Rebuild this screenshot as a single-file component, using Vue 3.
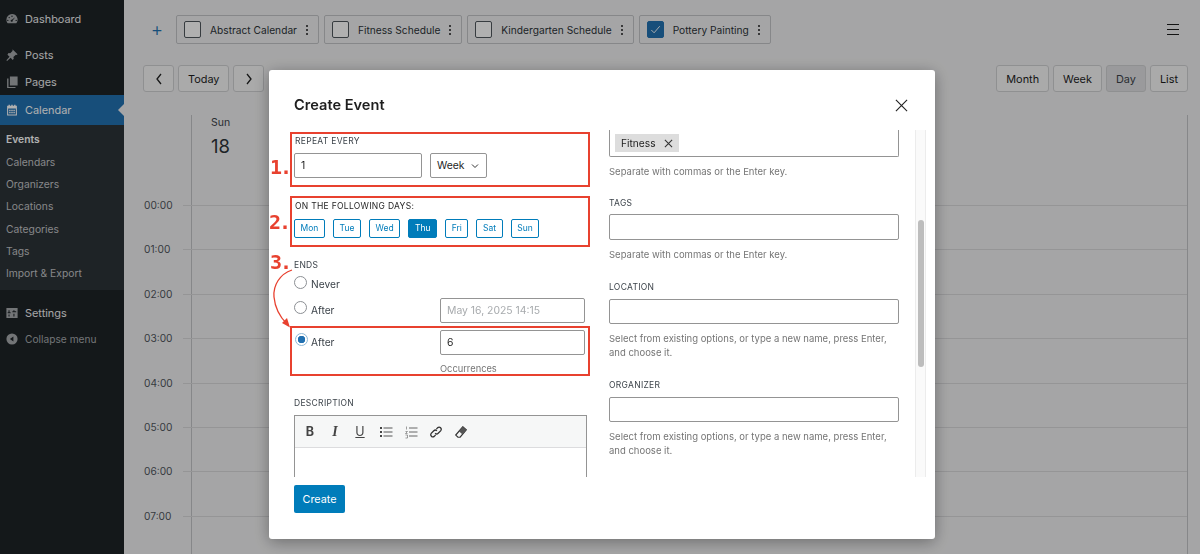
<template>
  <div class="admin">
    <aside class="sidebar">
      <a class="menu-item dash">
        <svg viewBox="0 0 20 20" class="menu-icon"><path d="M10 3a8 8 0 0 0-8 8c0 2 .7 3.700 1.800 5h12.400A8 8 0 0 0 10 3zm0 2a1 1 0 1 1 0 2 1 1 0 0 1 0-2zM6 7a1 1 0 1 1 0 2 1 1 0 0 1 0-2zm8.500.5L11 12a1.500 1.500 0 1 1-1.200-1zM4 11a1 1 0 1 1 0 2 1 1 0 0 1 0-2zm12 0a1 1 0 1 1 0 2 1 1 0 0 1 0-2z" /></svg>
        Dashboard
      </a>
      <a class="menu-item posts">
        <svg viewBox="0 0 20 20" class="menu-icon"><path d="M11 2l7 7-1.500 1-1-.500-3.500 3.500.5 2.500-1.500 1.500-3-3-5 4.500-1-1 4.500-5-3-3L5 7l2.500.5L11 4l-.5-1z" /></svg>
        Posts
      </a>
      <a class="menu-item">
        <svg viewBox="0 0 20 20" class="menu-icon"><path d="M7 2h11v13H7zM5 5v12h10v1.500H3V5z" /></svg>
        Pages
      </a>
      <a class="menu-item active">
        <svg viewBox="0 0 20 20" class="menu-icon"><path d="M3 4h2V2.500h2V4h2V2.500h2V4h2V2.500h2V4h2v14H3zm1.500 4v8.500h11V8zM6 9.500h2v2H6zm3 0h2v2H9zm3 0h2v2h-2zm-6 3h2v2H6zm3 0h2v2H9zm3 0h2v2h-2z" fill-rule="evenodd" /></svg>
        Calendar
      </a>
      <div class="submenu">
        <a v-for="(item, i) in subItems" :key="item" :class="{ current: i === 0 }">{{ item }}</a>
      </div>
      <a class="menu-item settings">
        <svg viewBox="0 0 20 20" class="menu-icon"><path d="M2 3h16v14H2zm3 3v3H3.800v1.500H8V9H6.500V6zm7 0v1.500h-1.500V9H16V7.500h-2.500V6zM5 12v3h1.500v-3zm7-1v4h1.500v-4z" fill-rule="evenodd" /></svg>
        Settings
      </a>
      <a class="menu-item collapse">
        <svg viewBox="0 0 20 20" class="menu-icon"><path d="M10 2a8 8 0 1 0 0 16 8 8 0 0 0 0-16zm2 4.500v7L7 10z" fill-rule="evenodd" /></svg>
        Collapse menu
      </a>
    </aside>

    <main class="main">
      <div class="calendar-bar">
        <span class="add">+</span>
        <div v-for="cal in calendars" :key="cal.name" class="cal-chip">
          <span class="check" :class="{ on: cal.on }">
            <svg v-if="cal.on" viewBox="0 0 16 16"><path d="M3.500 8.500l3 3 6-7" fill="none" stroke="#fff" stroke-width="1" /></svg>
          </span>
          <span class="cal-name">{{ cal.name }}</span>
          <span class="dots"><i></i><i></i><i></i></span>
        </div>
        <span class="burger"><i></i><i></i><i></i></span>
      </div>

      <div class="nav-row">
        <div class="btn-group">
          <button class="btn square">
            <svg viewBox="0 0 10 14"><path d="M7 2L3 7l4 5" fill="none" stroke="#222" stroke-width="1.300" /></svg>
          </button>
          <button class="btn">Today</button>
          <button class="btn square">
            <svg viewBox="0 0 10 14"><path d="M3 2l4 5-4 5" fill="none" stroke="#222" stroke-width="1.300" /></svg>
          </button>
        </div>
        <div class="btn-group">
          <button v-for="v in views" :key="v" class="btn" :class="{ pressed: v === 'Day' }">{{ v }}</button>
        </div>
      </div>

      <div class="grid">
        <div class="day-head">
          <div class="day-name">Sun</div>
          <div class="day-num">18</div>
        </div>
        <div v-for="h in hours" :key="h" class="hour-row">
          <span class="hour">{{ h }}</span>
        </div>
      </div>
    </main>

    <div class="overlay">
      <section class="modal">
        <header class="modal-head">
          <h2>Create Event</h2>
          <svg class="close" viewBox="0 0 14 14"><path d="M1 1l12 12M13 1L1 13" fill="none" stroke="#222" stroke-width="1.200" /></svg>
        </header>

        <div class="modal-body">
          <div class="col-left">
            <div class="mark mark-one">
              <span class="num">1.</span>
              <div class="label">Repeat every</div>
              <div class="repeat-row">
                <input class="field repeat-num" value="1" readonly>
                <div class="field select">
                  Week
                  <svg viewBox="0 0 10 6"><path d="M2 1.500l3 3 3-3" fill="none" stroke="#333" stroke-width="1" /></svg>
                </div>
              </div>
            </div>

            <div class="mark mark-two">
              <span class="num">2.</span>
              <div class="label dark">On the following days:</div>
              <div class="days">
                <span v-for="d in days" :key="d" class="day" :class="{ on: d === 'Thu' }">{{ d }}</span>
              </div>
            </div>

            <div class="ends">
              <span class="num">3.</span>
              <svg class="arrow" viewBox="0 0 24 64">
                <path d="M20 2C8 6 1 17 2 29c1 11 7 21 13 27" fill="none" stroke="#e8412f" stroke-width="1.300" />
                <path d="M18 59.500l-8-4.500 5-5z" fill="#e8412f" />
              </svg>
              <div class="label">Ends</div>
              <div class="end-row never">
                <span class="radio"></span><span class="never-text">Never</span>
              </div>
              <div class="end-row">
                <span class="radio"></span><span class="end-text">After</span>
                <input class="field end-input muted" value="May 16, 2025 14:15" readonly>
              </div>
            </div>

            <div class="mark mark-three">
              <div class="end-row">
                <span class="radio on"></span><span class="end-text">After</span>
                <input class="field end-input" value="6" readonly>
              </div>
              <div class="occ">Occurrences</div>
            </div>

            <div class="label desc-label">Description</div>
            <div class="editor">
              <div class="toolbar">
                <b class="tool">B</b>
                <i class="tool">I</i>
                <u class="tool under">U</u>
                <svg viewBox="0 0 14 14"><path d="M4.500 3h9M4.500 7h9M4.500 11h9" stroke="#555" stroke-width="1" /><path d="M1 2h2v2H1zM1 6h2v2H1zM1 10h2v2H1z" fill="#444" /></svg>
                <svg viewBox="0 0 14 14"><path d="M5 3h8.500M5 7h8.500M5 11h8.500" stroke="#666" stroke-width="1" /><path d="M2.500 1.500v3M1.500 6.500h2l-2 2h2M1.500 10h2v3h-2" fill="none" stroke="#777" stroke-width=".7" /></svg>
                <svg viewBox="0 0 16 16"><path d="M7 9.500a2.500 2.500 0 0 0 3.500 0l3-3A2.500 2.500 0 0 0 10 3L8.500 4.500M9 6.500a2.500 2.500 0 0 0-3.500 0l-3 3A2.500 2.500 0 0 0 6 13l1.500-1.500" fill="none" stroke="#333" stroke-width="1.500" /></svg>
                <svg viewBox="0 0 16 16"><path d="M10 2l4 3.500L7 14H4.500L2 11.500z" fill="none" stroke="#333" stroke-width="1.400" /><path d="M10 2l4 3.500-4.500 5-4-3.500z" fill="#555" /></svg>
              </div>
              <div class="editor-area"></div>
            </div>
          </div>

          <div class="col-right">
            <div class="tag-box">
              <span class="tag-chip">Fitness
                <svg viewBox="0 0 10 10"><path d="M1 1l8 8M9 1L1 9" stroke="#333" stroke-width="1.200" /></svg>
              </span>
            </div>
            <p class="help">Separate with commas or the Enter key.</p>

            <div class="label side-label tags">Tags</div>
            <div class="field wide tall"></div>
            <p class="help">Separate with commas or the Enter key.</p>

            <div class="label side-label location">Location</div>
            <div class="field wide"></div>
            <p class="help">Select from existing options, or type a new name, press Enter, and choose it.</p>

            <div class="label side-label organizer">Organizer</div>
            <div class="field wide"></div>
            <p class="help">Select from existing options, or type a new name, press Enter, and choose it.</p>
          </div>

          <div class="scrollbar"><div class="thumb"></div></div>
        </div>

        <footer class="modal-foot">
          <button class="create">Create</button>
        </footer>
      </section>
    </div>
  </div>
</template>

<script setup>
const subItems = ['Events', 'Calendars', 'Organizers', 'Locations', 'Categories', 'Tags', 'Import & Export']

const calendars = [
  { name: 'Abstract Calendar', on: false },
  { name: 'Fitness Schedule', on: false },
  { name: 'Kindergarten Schedule', on: false },
  { name: 'Pottery Painting', on: true }
]

const views = ['Month', 'Week', 'Day', 'List']
const days = ['Mon', 'Tue', 'Wed', 'Thu', 'Fri', 'Sat', 'Sun']
const hours = ['00:00', '01:00', '02:00', '03:00', '04:00', '05:00', '06:00', '07:00']
</script>

<style>
html, body {
  margin: 0;
  overflow: hidden;
}
</style>

<style scoped>
* {
  box-sizing: border-box;
}

.admin {
  display: flex;
  height: 554px;
  overflow: hidden;
  font-family: Inter, "Liberation Sans", sans-serif;
  color: #1e1e1e;
  background: #f0f0f1;
}

/* sidebar */
.sidebar {
  width: 124px;
  flex: none;
  padding-top: 5px;
  background: #1d2327;
}

.menu-item {
  display: flex;
  align-items: center;
  gap: 6px;
  height: 27px;
  padding-left: 5px;
  font-size: 10.900px;
  color: #f0f0f1;
}

.menu-icon {
  width: 14px;
  height: 14px;
  flex: none;
  fill: #a7aaad;
}

.posts {
  margin-top: 9px;
}

.active {
  position: relative;
  height: 30px;
  background: #2271b1;
  color: #fff;
}

.active .menu-icon {
  fill: #fff;
}

.active::after {
  content: '';
  position: absolute;
  right: 0;
  top: 9px;
  border: 6px solid transparent;
  border-right-color: #f0f0f1;
  border-left: 0;
}

.submenu {
  display: flex;
  flex-direction: column;
  height: 165px;
  padding-top: 3.400px;
  background: #2c3338;
}

.submenu a {
  height: 22.300px;
  padding-left: 6px;
  font-size: 10.300px;
  line-height: 22.300px;
  color: #c3c4c7;
}

.submenu a.current {
  font-weight: 600;
  color: #fff;
}

.settings {
  margin-top: 9px;
}

.collapse {
  margin-top: -1px;
  font-size: 10.200px;
  color: #a7aaad;
}

/* calendar behind the modal */
.main {
  flex: 1;
  min-width: 0;
  padding: 15px 12px 0 19px;
}

.calendar-bar {
  display: flex;
  align-items: center;
  gap: 5px;
  height: 29px;
}

.add {
  width: 28px;
  text-align: center;
  font-size: 19px;
  font-weight: 300;
  color: #2271b1;
}

.cal-chip {
  display: flex;
  align-items: center;
  height: 29px;
  padding: 0 8px 0 7px;
  border: 1px solid #c3c4c7;
  border-radius: 2px;
}

.check {
  display: flex;
  width: 17px;
  height: 17px;
  margin-right: 9px;
  border: 1.300px solid #50575e;
  border-radius: 2px;
  background: #fff;
}

.check.on {
  border-color: #2271b1;
  background: #2271b1;
}

.cal-name {
  font-size: 10.200px;
  color: #2c3338;
}

.dots {
  display: flex;
  flex-direction: column;
  gap: 2px;
  margin-left: 7px;
  padding: 0 2px;
}

.dots i {
  width: 2px;
  height: 2px;
  border-radius: 50%;
  background: #1e1e1e;
}

.burger {
  display: flex;
  flex-direction: column;
  gap: 4px;
  width: 12px;
  margin-left: auto;
  margin-right: 9px;
}

.burger i {
  height: 1px;
  background: #1e1e1e;
}

.nav-row {
  display: flex;
  justify-content: space-between;
  margin-top: 21px;
}

.btn-group {
  display: flex;
  gap: 4px;
}

.btn {
  height: 27px;
  padding: 0 9px;
  border: 1px solid #d0d1d3;
  border-radius: 3px;
  background: #f6f7f7;
  font-family: inherit;
  font-size: 10.900px;
  color: #1e1e1e;
}

.btn.square {
  display: flex;
  align-items: center;
  justify-content: center;
  width: 31px;
  padding: 0;
}

.btn.square svg {
  width: 10px;
  height: 14px;
}

.btn.pressed {
  background: #e0e0e2;
  color: #3c434a;
}

.grid {
  position: relative;
  margin-top: 23px;
  border-right: 1px solid #c3c4c7;
}

.grid::before {
  content: '';
  position: absolute;
  left: 48px;
  top: 0;
  bottom: 0;
  width: 1px;
  background: #c3c4c7;
}

.day-head {
  height: 90px;
  padding: 1px 0 0 68px;
}

.day-name {
  font-size: 10.500px;
  color: #3c434a;
}

.day-num {
  margin-top: 6px;
  font-size: 18.500px;
  color: #2c3338;
}

.hour-row {
  height: 44.400px;
  margin-left: 40px;
  border-top: 1px solid #d8d8da;
  position: relative;
}

.hour {
  position: absolute;
  left: -39px;
  top: -7px;
  font-size: 10.200px;
  color: #50575e;
}

.overlay {
  position: fixed;
  inset: 0;
  display: flex;
  justify-content: center;
  align-items: flex-start;
  padding: 70px 0 0 4px;
  background: rgba(0, 0, 0, 0.31);
}

/* modal */
.modal {
  display: flex;
  flex-direction: column;
  width: 666px;
  height: 469px;
  border-radius: 3px;
  background: #fff;
  box-shadow: 0 3px 16px rgba(0, 0, 0, 0.35);
}

.modal-head {
  display: flex;
  align-items: center;
  justify-content: space-between;
  height: 60px;
  flex: none;
  padding: 10px 27px 0 25px;
}

.modal-head h2 {
  margin: 0;
  font-size: 14.600px;
  font-weight: 600;
  color: #1e1e1e;
}

.close {
  width: 13px;
  height: 13px;
}

.modal-body {
  display: flex;
  height: 347px;
  flex: none;
  overflow: hidden;
  padding-left: 25px;
}

.col-left {
  width: 293px;
  flex: none;
  padding-top: 2px;
}

.col-right {
  width: 290px;
  flex: none;
  margin-left: 22px;
}

.label {
  font-size: 8.500px;
  line-height: 11px;
  letter-spacing: 0.3px;
  text-transform: uppercase;
  color: #3c434a;
}

.label.dark {
  color: #1e1e1e;
}

.num {
  position: absolute;
  font-family: "DejaVu Sans Mono", monospace;
  font-size: 20px;
  font-weight: 700;
  line-height: 20px;
  letter-spacing: -2px;
  color: #e8412f;
}

.mark {
  position: relative;
  margin: 0 -3px 0 -4px;
  border: 2px solid #e8412f;
  padding: 2px;
}

.mark .label {
  margin-left: 1px;
}

.mark-one {
  height: 55px;
}

.mark-one .num {
  left: -22px;
  top: 23px;
}

.mark-two {
  height: 51px;
  margin-top: 9px;
  padding-top: 3px;
}

.mark-two .num {
  left: -23px;
  top: 14px;
}

.mark-three {
  height: 50px;
  margin-top: 3px;
}

.field {
  display: block;
  height: 25px;
  border: 1px solid #949494;
  border-radius: 2px;
  background: #fff;
  padding: 0 6px;
  font-family: inherit;
  font-size: 10.400px;
  color: #1e1e1e;
  outline: none;
}

.repeat-row {
  display: flex;
  gap: 8px;
  margin-top: 6px;
}

.repeat-num {
  width: 128px;
}

.select {
  display: flex;
  align-items: center;
  justify-content: space-between;
  width: 57px;
}

.select svg {
  width: 10px;
  height: 6px;
}

.days {
  display: flex;
  margin-top: 7px;
}

.day {
  height: 19px;
  margin-right: 8px;
  padding: 0 5.600px;
  border: 1px solid #007cba;
  border-radius: 2px;
  font-size: 8.500px;
  line-height: 17px;
  color: #007cba;
}

.day.on {
  background: #007cba;
  color: #fff;
}

.ends {
  position: relative;
  margin-top: 13px;
}

.ends .num {
  left: -24px;
  top: -8px;
}

.arrow {
  position: absolute;
  left: -22px;
  top: 8px;
  width: 24px;
  height: 64px;
}

.end-row {
  display: flex;
  align-items: flex-start;
  font-size: 10.200px;
  color: #3c434a;
}

.never {
  height: 18px;
  margin-top: 2px;
  margin-bottom: 7px;
}

.never-text {
  padding-top: 5px;
}

.radio {
  width: 13px;
  height: 13px;
  flex: none;
  margin: 3px 4px 0 0;
  border: 1px solid #8c8f94;
  border-radius: 50%;
  background: #fff;
}

.mark-three .radio {
  margin-left: 1px;
  margin-right: 3px;
}

.radio.on {
  border-color: #8fb9d6;
  background: radial-gradient(circle, #2271b1 0 3.500px, #fff 4px);
}

.end-text {
  padding-top: 6px;
  width: 129px;
}

.end-input {
  width: 145px;
}

.muted {
  color: #a7aaad;
}

.occ {
  margin: 8px 0 0 146px;
  font-size: 9.300px;
  line-height: 12px;
  color: #757575;
}

.desc-label {
  margin-top: 22px;
}

.editor {
  margin-top: 6px;
  height: 80px;
  border: 1px solid #949494;
  border-bottom: 0;
}

.toolbar {
  display: flex;
  align-items: center;
  gap: 11px;
  height: 32px;
  padding: 0 8px;
  border-bottom: 1px solid #dcdcde;
  background: #f6f7f7;
  font-size: 12.500px;
  color: #444;
}

.tool {
  width: 14px;
  text-align: center;
}

.under {
  margin-right: 1px;
}

.toolbar i {
  font-family: "Liberation Serif", serif;
  font-weight: 700;
  font-size: 14px;
}

.toolbar svg {
  width: 14px;
  height: 14px;
}

.tag-box {
  display: flex;
  align-items: flex-end;
  height: 27px;
  padding: 0 0 4px 5px;
  border: 1px solid #949494;
  border-top: 0;
  border-radius: 0 0 2px 2px;
}

.tag-chip {
  display: flex;
  align-items: center;
  gap: 8px;
  height: 18px;
  padding: 0 6px;
  background: #ddd;
  font-size: 10.200px;
  color: #1e1e1e;
}

.tag-chip svg {
  width: 9px;
  height: 9px;
}

.help {
  margin: 8px 0 0;
  font-size: 9.500px;
  line-height: 14px;
  color: #757575;
}

.side-label {
  margin-top: 20px;
  margin-bottom: 6px;
}

.side-label.tags {
  margin-top: 19px;
  margin-bottom: 5px;
}

.wide {
  width: 290px;
}

.tall {
  height: 26px;
}

.scrollbar {
  position: relative;
  width: 11px;
  height: 100%;
  flex: none;
  margin-left: 16px;
  border-left: 1px solid #ececec;
  border-right: 1px solid #ececec;
  background: #fafafa;
}

.thumb {
  position: absolute;
  left: 2px;
  top: 90px;
  width: 6px;
  height: 147px;
  border-radius: 3px;
  background: #bdbdbd;
}

.modal-foot {
  padding: 8px 25px 0;
}

.create {
  width: 51px;
  height: 28px;
  border: 0;
  border-radius: 2px;
  background: #007cba;
  font-family: inherit;
  font-size: 10.800px;
  color: #fff;
}
</style>
